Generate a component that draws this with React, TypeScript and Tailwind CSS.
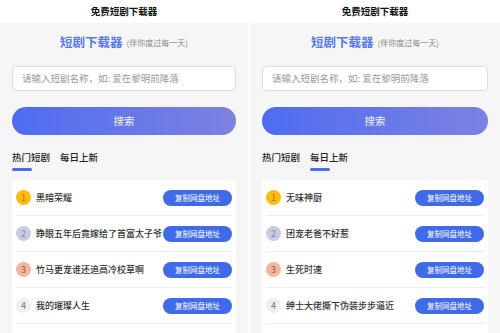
const FONT = '"Noto Sans CJK SC", "Noto Sans", sans-serif';

type Item = { rank: number; name: string };

const LEFT: Item[] = [
  { rank: 1, name: '黑暗荣耀' },
  { rank: 2, name: '睁眼五年后竟嫁给了首富太子爷' },
  { rank: 3, name: '竹马更宠谁还追高冷校草啊' },
  { rank: 4, name: '我的璀璨人生' },
];

const RIGHT: Item[] = [
  { rank: 1, name: '无味神厨' },
  { rank: 2, name: '团宠老爸不好惹' },
  { rank: 3, name: '生死时速' },
  { rank: 4, name: '绅士大佬撕下伪装步步逼近' },
];

const RANK_STYLE: Record<number, string> = {
  1: 'bg-[#fdbd10] text-[#b8760c]',
  2: 'bg-[#c9cbe3] text-[#858aad]',
  3: 'bg-[#f1b79e] text-[#a9553a]',
  4: 'bg-[#efefef] text-[#777777]',
};

function Row({ item }: { item: Item }) {
  return (
    <div className="flex items-center h-[36px] border-b border-[#efefef]">
      <div
        className={`w-[15px] h-[15px] rounded-full flex items-center justify-center text-[9px] leading-none shrink-0 ${RANK_STYLE[item.rank]}`}
      >
        {item.rank}
      </div>
      <div className="ml-[5px] flex-1 min-w-0 overflow-hidden whitespace-nowrap text-[9px] text-[#333] font-medium">
        {item.name}
      </div>
      <button className="shrink-0 w-[69px] h-[16px] rounded-full bg-[#3f6be8] text-white text-[7.5px] leading-none">
        复制网盘地址
      </button>
    </div>
  );
}

function Panel({ items, tab, width }: { items: Item[]; tab: 0 | 1; width: string }) {
  return (
    <div className={`flex flex-col h-full ${width}`}>
      <div className="h-[23px] bg-white flex items-center justify-center text-[9.5px] font-bold text-[#111]">
        免费短剧下载器
      </div>
      <div className="flex-1 bg-[#f6f6f6] px-3 flex flex-col">
        <div className="pt-[11px] flex items-end justify-center h-[27px] leading-[16px]">
          <span className="text-[12.5px] font-bold text-[#5b79ef]">短剧下载器</span>
          <span className="ml-[4px] text-[8px] text-[#888] leading-[14px]">(伴你度过每一天)</span>
        </div>
        <div className="mt-[16px] h-[25px] bg-white border border-[#dedede] rounded-[4px] flex items-center pl-[9px] text-[9.5px] text-[#9a9a9a] whitespace-nowrap overflow-hidden">
          请输入短剧名称，如: 爱在黎明前降落
        </div>
        <button className="mt-[16px] h-[28px] w-full rounded-full bg-gradient-to-r from-[#4d6cf1] to-[#7d81e1] text-[10.5px] text-white/90">
          搜索
        </button>
        <div className="mt-[16px] flex gap-[10px] text-[9.5px] leading-[12px] font-medium text-[#222]">
          <div className="flex flex-col">
            <span>热门短剧</span>
            <span className={`mt-[5px] h-[3px] w-[20px] rounded-full ${tab === 0 ? 'bg-[#4a6cf0]' : 'bg-transparent'}`} />
          </div>
          <div className="flex flex-col">
            <span>每日上新</span>
            <span className={`mt-[5px] h-[3px] w-[20px] rounded-full ${tab === 1 ? 'bg-[#4a6cf0]' : 'bg-transparent'}`} />
          </div>
        </div>
        <div className="mt-[9px] bg-white px-[4px] flex-1">
          {items.map(it => (
            <Row key={it.rank} item={it} />
          ))}
        </div>
      </div>
    </div>
  );
}

export default function App() {
  return (
    <div className="w-[500px] h-[333px] overflow-hidden bg-white flex gap-[2px]" style={{ fontFamily: FONT }}>
      <Panel items={LEFT} tab={0} width="w-[248px]" />
      <Panel items={RIGHT} tab={1} width="w-[250px]" />
    </div>
  );
}
